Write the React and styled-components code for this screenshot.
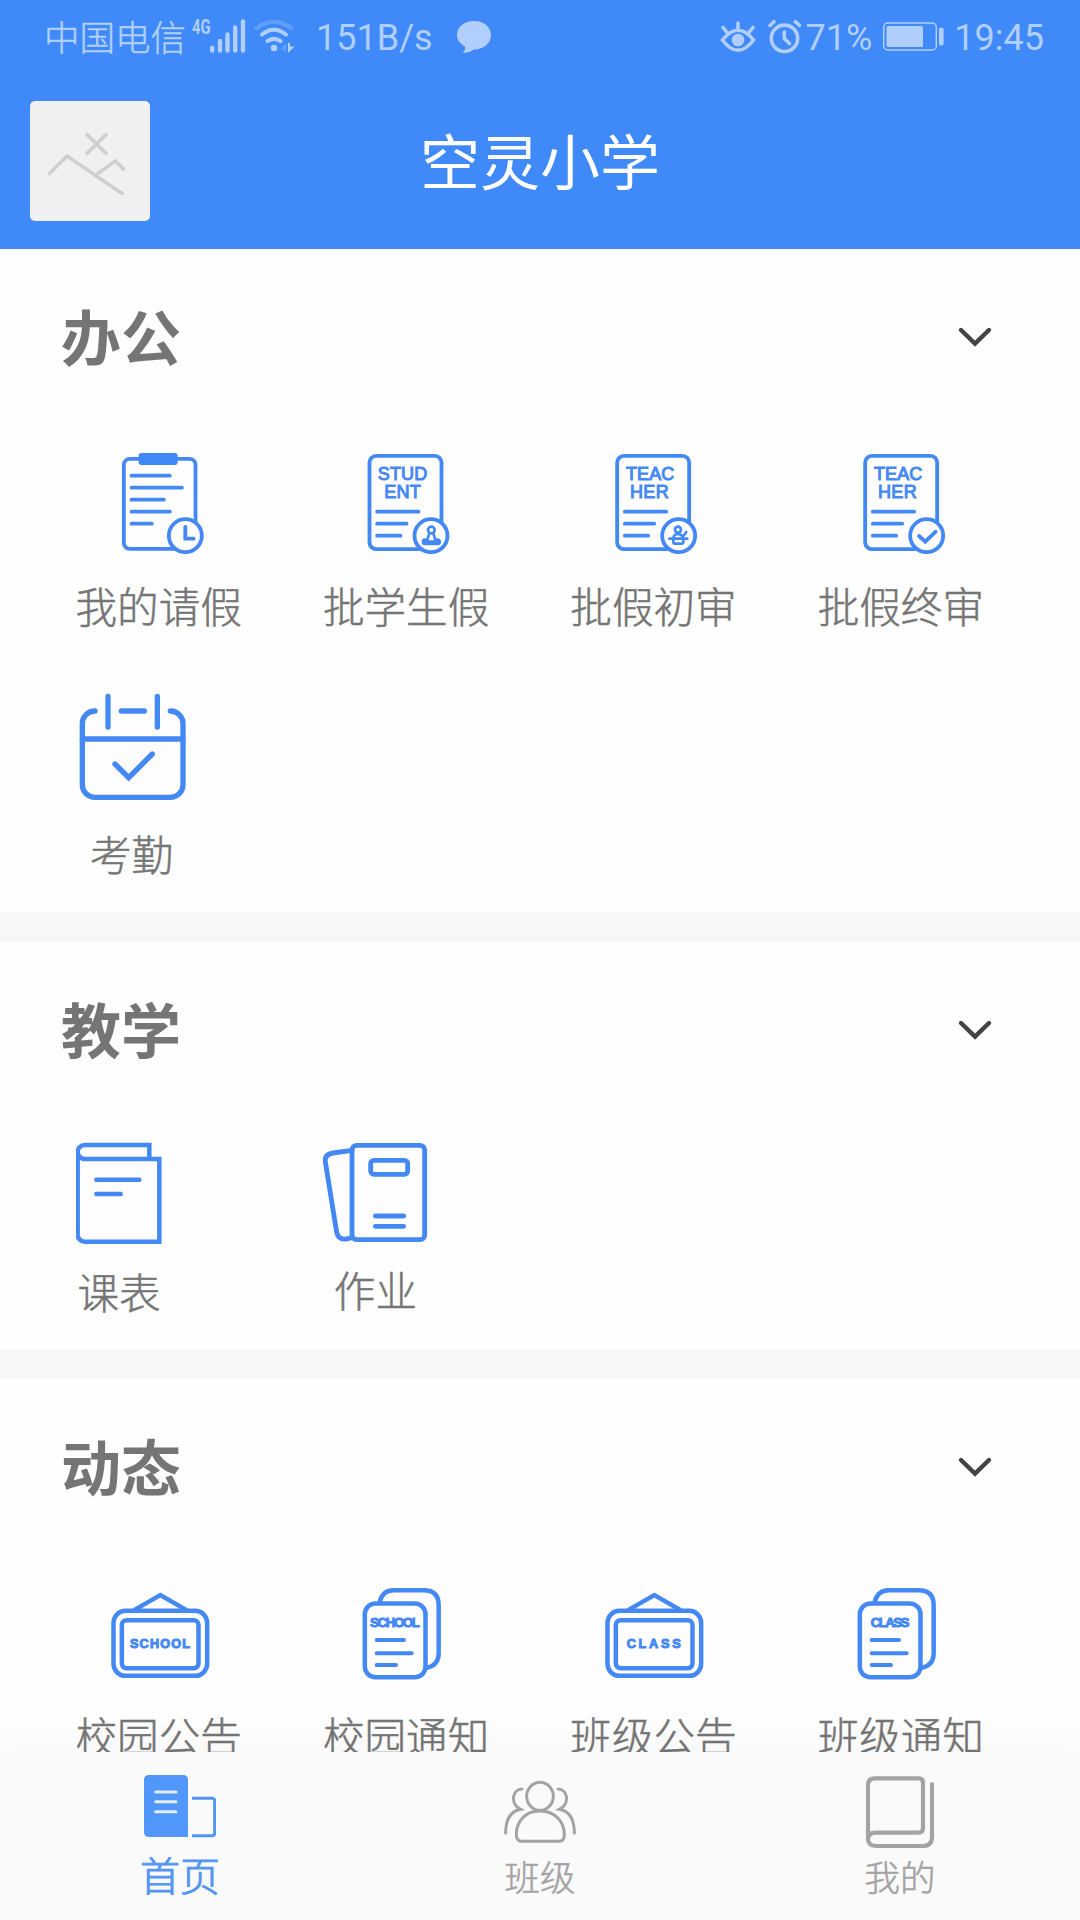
import React from "react";
import styled, { createGlobalStyle } from "styled-components";

const GlobalStyle = createGlobalStyle`
    :root {
        --blue: #3f89f8;
        --icon: #4488f4;
        --status: #b1cffc;
        --text: #757575;
        --muted: #a3a3a3;
    }

    body {
        margin: 0;
        background-color: #fff;
        font-family: Roboto, "Noto Sans CJK SC", sans-serif;
    }

    * {
        box-sizing: border-box;
    }
`

const Screen = styled.div`
    width: 1080px;
    height: 1920px;
    display: flex;
    flex-direction: column;
    overflow: hidden;
    background-color: #fefefe;
`

const TopBar = styled.header`
    flex: none;
    height: 249px;
    background-color: var(--blue);
`

const StatusBar = styled.div`
    height: 74px;
    padding: 0 36px 0 44px;
    display: flex;
    justify-content: space-between;
    color: var(--status);
`

const StatusGroup = styled.div`
    display: flex;
    align-items: center;

    svg {
        display: block;
    }
`

const StatusItem = styled.span`
    margin-left: ${props => props.$left || 0}px;
`

const StatusText = styled(StatusItem)`
    font-size: 36px;
    line-height: 72px;
    padding-top: 2px;
    white-space: nowrap;
`

const Carrier = styled(StatusText)`
    width: 143px;
    font-size: 35.5px;
    font-weight: 300;
    padding-top: 4px;
    -webkit-text-stroke: 0.5px currentColor;
`

const NavBar = styled.div`
    height: 175px;
    padding: 27px 30px 0;
    display: grid;
    grid-template-columns: 120px 1fr 120px;
`

const Avatar = styled.div`
    height: 120px;
    border-radius: 5px;
    background-color: #f0f0f0;
`

const SchoolName = styled.h1`
    margin: 0;
    padding-top: 4px;
    font-size: 60px;
    font-weight: 400;
    line-height: 120px;
    text-align: center;
    color: #fff;
`

const Content = styled.main`
    flex: 1;
    min-height: 0;
    overflow: hidden;
`

const Section = styled.section`
    height: ${props => props.$height}px;
    border-bottom: 30px solid #f7f7f7;
`

const SectionHeader = styled.div`
    height: 176px;
    padding: 0 87px 0 61px;
    display: flex;
    align-items: center;
    justify-content: space-between;
`

const SectionTitle = styled.h2`
    margin: 0;
    padding-top: 7px;
    font-size: 60px;
    line-height: 80px;
    font-weight: 700;
    color: var(--text);
`

const Grid = styled.div`
    padding: ${props => props.$top}px 0 0 75.5px;
    display: grid;
    grid-template-columns: repeat(4, 247.4px);
    row-gap: 58px;
    justify-items: start;
    align-items: start;
`

const Tile = styled.div`
    display: flex;
    flex-direction: column;
    align-items: center;
    gap: ${props => props.$gap}px;

    svg {
        display: block;
        fill: none;
        stroke: var(--icon);
        stroke-linecap: round;
    }

    text {
        fill: var(--icon);
        font-family: "Liberation Sans", sans-serif;
    }
`

const TileLabel = styled.span`
    font-size: 41.6px;
    font-weight: 300;
    line-height: 50px;
    white-space: nowrap;
    color: var(--text);
    -webkit-text-stroke: 0.5px currentColor;
`

const TabBar = styled.nav`
    flex: none;
    position: relative;
    height: 168px;
    padding-top: 18px;
    display: grid;
    grid-template-columns: repeat(3, 1fr);
    background-color: #fafafa;
    box-shadow: 0 0 40px 10px rgba(0, 0, 0, 0.03);
`

const Tab = styled.div`
    display: flex;
    flex-direction: column;
    align-items: center;
    color: ${props => props.$active ? "#5295f2" : "var(--muted)"};

    svg {
        display: block;
        fill: none;
        stroke: currentColor;
        stroke-linecap: round;
    }

    span {
        padding-top: ${props => props.$active ? 3 : 2}px;
        font-size: ${props => props.$active ? 40 : 35.5}px;
        font-weight: 300;
        line-height: ${props => props.$active ? 50 : 55}px;
        -webkit-text-stroke: ${props => props.$active ? 0.9 : 0.5}px currentColor;
    }
`

const Signal = () => (
    <svg width="112" height="74" viewBox="187 0 112 74" fill="none" stroke="currentColor" strokeLinecap="round">
        <text x="192" y="34" fontSize="21" fontWeight="700" fontFamily="Roboto" textLength="18.5" lengthAdjust="spacingAndGlyphs" fill="currentColor" stroke="none">4G</text>
        <path strokeWidth="4.4" d="M212.2 47.6V50.6M220 41V50.6M227.5 34.5V50.6M235.2 27.5V50.6M243 21.5V50.6" />
        <g strokeWidth="4">
            <path opacity=".3" d="M256.5 28.3Q274 15.5 291.5 28.3" />
            <path d="M262 34.5Q274 25 286 34.5M267.4 41.2Q274 36.5 280.6 41.2" />
        </g>
        <circle cx="274" cy="48" r="3.3" fill="currentColor" stroke="none" />
        <path opacity=".3" fill="currentColor" stroke="none" d="M286 43V52H284V49.5H280Z" />
        <path fill="currentColor" stroke="none" d="M288 43H290V46.5H294.5L288.5 52.5H288Z" />
    </svg>
)

const Bubble = () => (
    <svg width="38" height="74" viewBox="455 0 38 74" fill="currentColor">
        <path d="M474 21C484 21 491 27 491 35C491 43 484 49.5 474 49.5C471 51.5 467 53 462.5 53C465 51 465.5 49 465 46.5C460 44 457 40 457 35C457 27 464 21 474 21Z" />
    </svg>
)

const StatusIcons = () => (
    <svg width="88" height="74" viewBox="719 0 88 74" fill="none" stroke="currentColor" strokeWidth="3.6" strokeLinecap="round">
        <path d="M723.4 40Q739 20.5 754.6 40Q739 60.5 723.4 40ZM739 23V29M724 27.5L728 32.5M754 27.5L750 32.5" />
        <circle cx="739" cy="40" r="6.3" fill="currentColor" stroke="none" />
        <circle cx="785.5" cy="38.3" r="13.2" />
        <path d="M771 25.5L775 21.7M800.5 25.5L796.3 21.7M785.3 32V38.5L790.5 43.5" />
    </svg>
)

const Battery = () => (
    <svg width="64" height="74" viewBox="882 0 64 74" fill="currentColor">
        <rect x="884.7" y="23" width="52.6" height="27" rx="4" fill="none" stroke="currentColor" strokeWidth="1.5" />
        <rect x="887.5" y="26" width="36.5" height="21" rx="1.5" />
        <rect x="940" y="27.5" width="4.6" height="18" rx="2" />
    </svg>
)

const BrokenImage = () => (
    <svg width="120" height="120" viewBox="30 101 120 120" fill="none" stroke="#cfcfcf" strokeWidth="3.6" strokeLinecap="round">
        <path d="M49.5 173.5L67 156L122 193.5M96 175L115.3 161L123.5 169M87 134.5L106 153.5M106 134.5L87 153.5" />
    </svg>
)

const Chevron = () => (
    <svg width="36" height="24" viewBox="957 325 36 24" fill="none" stroke="#444" strokeWidth="4.4" strokeLinecap="round">
        <path d="M961 330L975 343.6L989 330" />
    </svg>
)

const LeaveIcon = () => (
    <svg width="110" height="102" viewBox="-2 0 330 306" strokeWidth="11.5">
        <rect x="57.5" y="17.5" width="215" height="270" rx="18" />
        <rect x="102" y="0" width="117" height="36" rx="8" fill="var(--blue)" stroke="none" />
        <path d="M80.5 68H195.5M80.5 104H231.5M80.5 140H177.5M80.5 176H195.5M80.5 212H141.5" />
        <circle cx="242" cy="248" r="49.5" fill="#fefefe" />
        <path d="M242 222V257H267" />
    </svg>
)

const DocIcon = ({ lines, shift = 0, children }) => (
    <svg width="110" height="102" viewBox={`${-shift} 0 330 306`} strokeWidth="11.5">
        <rect x="55.5" y="8.5" width="216" height="280" rx="20" />
        <g fontSize="54" strokeWidth="3">
            <text x={lines[0].x} y="81" textLength={lines[0].w}>{lines[0].text}</text>
            <text x={lines[1].x} y="135" textLength={lines[1].w}>{lines[1].text}</text>
        </g>
        <path d="M78.5 176H202.5M78.5 212H166.5M78.5 248H148.5" />
        <circle cx="240" cy="248" r="49.5" fill="#fefefe" />
        {children}
    </svg>
)

const student = [{ text: "STUD", x: 80, w: 149 }, { text: "ENT", x: 100, w: 109 }]
const teacher = [{ text: "TEAC", x: 82, w: 145 }, { text: "HER", x: 94, w: 116 }]

const StudentIcon = () => (
    <DocIcon lines={student}>
        <path strokeWidth="8" d="M235 241L229 260H221Q216 260 216 267Q216 273 223 273H260Q266 273 266 267Q266 260 260 260H253L247 241M221 266H261" />
        <circle cx="241" cy="231" r="10" strokeWidth="8" />
    </DocIcon>
)

const FirstReviewIcon = () => (
    <DocIcon lines={teacher} shift={2}>
        <path strokeWidth="8" d="M212 257H266M224 257V267Q224 272 229 272H248Q254 272 254 267V257M224 256Q225 243 238 243Q250 244 252 252L263 237" />
        <circle cx="238" cy="230" r="9" strokeWidth="8" />
    </DocIcon>
)

const FinalReviewIcon = () => (
    <DocIcon lines={teacher} shift={2}>
        <path d="M217 249L236 266L267 236" />
    </DocIcon>
)

const AttendanceIcon = () => (
    <svg width="112" height="110" viewBox="106 96 336 330" strokeWidth="16">
        <path d="M163 153A38 38 0 0 0 125 191V374A38 38 0 0 0 163 412H389A38 38 0 0 0 427 374V191A38 38 0 0 0 389 153" />
        <path d="M125 237H427M202 109V201M350 109V201M242 153H311M223 312L264 353L335 282" />
    </svg>
)

const TimetableIcon = () => (
    <svg width="87" height="104" viewBox="107 486 261 312" strokeWidth="13.5">
        <path d="M327 537V495H133A21 21 0 0 0 133 537H357V785H133A21 21 0 0 1 112 764V516M168 599H297M168 642H241" />
    </svg>
)

const HomeworkIcon = () => (
    <svg width="105" height="102" viewBox="846 486 315 306" strokeWidth="14.5">
        <rect x="933" y="496" width="218" height="283" rx="14" />
        <path d="M933 511L876 519Q850 523 853 545L887 757Q892 780 915 777L933 773M1003 708H1088M1003 739H1088" />
        <rect x="989" y="541" width="111" height="42" rx="10" />
    </svg>
)

const BoardIcon = ({ text, x, w }) => (
    <svg width="110" height="96" viewBox="191 558 330 288" strokeWidth="13.5">
        <path d="M284 629L360 585L436 629" />
        <rect x="219.5" y="632.5" width="281" height="195" rx="36" />
        <rect x="244.5" y="660.5" width="230" height="144" rx="14" />
        <text x={x} y="745" textLength={w} fontSize="38" fontWeight="700" strokeWidth="3">{text}</text>
    </svg>
)

const NoticeIcon = ({ text, x, w }) => (
    <svg width="110" height="96" viewBox="934 558 330 288" strokeWidth="13.5">
        <path d="M1020 607Q1028 571 1062 571H1152Q1197 571 1197 616V760Q1197 795 1164 803" />
        <rect x="975.5" y="610.5" width="182" height="221" rx="32" />
        <text x={x} y="681" textLength={w} fontSize="40" fontWeight="700" strokeWidth="3">{text}</text>
        <path strokeWidth="12" d="M1011 720H1093M1011 760H1116M1011 795H1069" />
    </svg>
)

const HomeIcon = () => (
    <svg width="72" height="80" viewBox="132 90 216 240" strokeWidth="9">
        <path fill="#5197fa" stroke="none" d="M147 105H249Q264 105 264 120V291H147Q132 291 132 276V120Q132 105 147 105Z" />
        <path stroke="#e0eeff" d="M167 156H228M167 185H228M167 215H228" />
        <path strokeLinecap="butt" d="M276 175H336Q344 175 344 183V279Q344 287 336 287H276" />
    </svg>
)

const ClassIcon = () => (
    <svg width="72" height="80" viewBox="72 90 216 240" strokeWidth="9">
        <ellipse cx="180" cy="169" rx="40" ry="42" />
        <path d="M127 304H236Q253 304 253 284C253 245 225 213 180 213C135 213 109 245 109 284Q109 304 127 304Z" />
        <path d="M126 147C98 147 88 190 122 208C90 214 77 240 77 279M234 147C262 147 272 190 238 208C270 214 283 240 283 279" />
    </svg>
)

const MineIcon = () => (
    <svg width="72" height="80" viewBox="1152 90 216 240" strokeWidth="12.5">
        <path d="M1164 300V136Q1164 115 1185 115H1316Q1329 115 1329 128V264Q1329 278 1315 278H1184Q1164 280 1164 298Q1166 318 1188 318H1328Q1356 318 1356 290V132" />
    </svg>
)

const sections = [
    {
        title: "办公",
        height: 693,
        top: 28,
        items: [
            { label: "我的请假", icon: <LeaveIcon />, gap: 29 },
            { label: "批学生假", icon: <StudentIcon />, gap: 29 },
            { label: "批假初审", icon: <FirstReviewIcon />, gap: 29 },
            { label: "批假终审", icon: <FinalReviewIcon />, gap: 29 },
            { label: "考勤", icon: <AttendanceIcon />, gap: 30 },
        ],
    },
    {
        title: "教学",
        height: 437,
        top: 24,
        items: [
            { label: "课表", icon: <TimetableIcon />, gap: 24 },
            { label: "作业", icon: <HomeworkIcon />, gap: 24 },
        ],
    },
    {
        title: "动态",
        height: 437,
        top: 31,
        items: [
            { label: "校园公告", icon: <BoardIcon text="SCHOOL" x={269} w={180} />, gap: 32 },
            { label: "校园通知", icon: <NoticeIcon text="SCHOOL" x={991} w={150} />, gap: 32 },
            { label: "班级公告", icon: <BoardIcon text="CLASS" x={277} w={162} />, gap: 32 },
            { label: "班级通知", icon: <NoticeIcon text="CLASS" x={1008} w={116} />, gap: 32 },
        ],
    },
]

export default () => {
    return (
        <>
        <GlobalStyle />
        <Screen>
            <TopBar>
                <StatusBar>
                    <StatusGroup>
                        <Carrier>中国电信</Carrier>
                        <Signal />
                        <StatusText $left={17}>151B/s</StatusText>
                        <StatusItem $left={22}><Bubble /></StatusItem>
                    </StatusGroup>
                    <StatusGroup>
                        <StatusIcons />
                        <StatusText>71%</StatusText>
                        <StatusItem $left={9}><Battery /></StatusItem>
                        <StatusText $left={9}>19:45</StatusText>
                    </StatusGroup>
                </StatusBar>
                <NavBar>
                    <Avatar><BrokenImage /></Avatar>
                    <SchoolName>空灵小学</SchoolName>
                </NavBar>
            </TopBar>

            <Content>
                {sections.map(section => (
                    <Section key={section.title} $height={section.height}>
                        <SectionHeader>
                            <SectionTitle>{section.title}</SectionTitle>
                            <Chevron />
                        </SectionHeader>
                        <Grid $top={section.top}>
                            {section.items.map(item => (
                                <Tile key={item.label} $gap={item.gap}>
                                    {item.icon}
                                    <TileLabel>{item.label}</TileLabel>
                                </Tile>
                            ))}
                        </Grid>
                    </Section>
                ))}
            </Content>

            <TabBar>
                <Tab $active>
                    <HomeIcon />
                    <span>首页</span>
                </Tab>
                <Tab>
                    <ClassIcon />
                    <span>班级</span>
                </Tab>
                <Tab>
                    <MineIcon />
                    <span>我的</span>
                </Tab>
            </TabBar>
        </Screen>
        </>
    )
}
